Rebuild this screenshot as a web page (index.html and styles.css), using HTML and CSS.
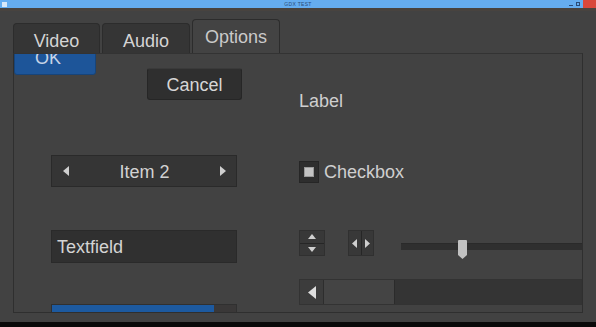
FILE: index.html
```html
<!DOCTYPE html>
<html>
<head>
<meta charset="utf-8">
<link rel="stylesheet" href="styles.css">
</head>
<body>
<header class="titlebar">
  <span class="appicon"></span>
  <span class="title">GDX TEST</span>
  <div class="wincontrols">
    <span class="wc-min"></span>
    <span class="wc-max"></span>
    <span class="wc-close"></span>
  </div>
</header>
<div class="strip"></div>
<main class="window">
  <nav class="tabs">
    <div class="tab">Video</div>
    <div class="tab">Audio</div>
    <div class="tab active">Options</div>
  </nav>
  <section class="panel">
    <div class="col-left">
      <div class="row1">
        <button class="btn btn-ok">OK</button>
        <button class="btn btn-cancel">Cancel</button>
      </div>
      <div class="selectbox">
        <svg class="arrow" width="6" height="10" viewBox="0 0 6 10"><polygon points="6,0 6,10 0,5" fill="#cfcfcf"/></svg>
        <span class="sel-text">Item 2</span>
        <svg class="arrow" width="6" height="10" viewBox="0 0 6 10"><polygon points="0,0 0,10 6,5" fill="#cfcfcf"/></svg>
      </div>
      <div class="textfield">Textfield</div>
      <div class="progress"><div class="progress-fill"></div></div>
    </div>
    <div class="col-right">
      <div class="label">Label</div>
      <div class="checkrow">
        <span class="checkbox"><span class="check-inner"></span></span>
        <span class="check-text">Checkbox</span>
      </div>
      <div class="controlrow">
        <div class="vspin">
          <span class="vspin-half"><svg width="8" height="5" viewBox="0 0 8 5"><polygon points="0,5 8,5 4,0" fill="#cfcfcf"/></svg></span>
          <span class="vspin-half"><svg width="8" height="5" viewBox="0 0 8 5"><polygon points="0,0 8,0 4,5" fill="#cfcfcf"/></svg></span>
        </div>
        <div class="hspin">
          <span class="hspin-half"><svg width="5" height="9" viewBox="0 0 5 9"><polygon points="5,0 5,9 0,4.5" fill="#cfcfcf"/></svg></span>
          <span class="hspin-half"><svg width="5" height="9" viewBox="0 0 5 9"><polygon points="0,0 0,9 5,4.5" fill="#cfcfcf"/></svg></span>
        </div>
        <div class="slider">
          <div class="slider-track"></div>
          <svg class="slider-knob" width="9" height="19" viewBox="0 0 9 19"><path d="M1 0 H8 Q9 0 9 1 V15 L4.5 19 L0 15 V1 Q0 0 1 0 Z" fill="#c2c2c2"/></svg>
        </div>
      </div>
      <div class="scrollbar">
        <span class="sb-btn"><svg width="8" height="13" viewBox="0 0 8 13"><polygon points="8,0 8,13 0,6.5" fill="#dedede"/></svg></span>
        <span class="sb-knob"></span>
        <span class="sb-rest"></span>
      </div>
    </div>
  </section>
</main>
<div class="taskbar"></div>
</body>
</html>
```
FILE: styles.css
```css
html, body {
  margin: 0;
  padding: 0;
}
body {
  width: 596px;
  height: 327px;
  overflow: hidden;
  background: #424242;
  font-family: "Liberation Sans", Arial, sans-serif;
  color: #d2d2d2;
  display: flex;
  flex-direction: column;
}
.titlebar {
  height: 8px;
  background: #65adf0;
  display: flex;
  align-items: center;
  position: relative;
  flex: none;
}
.appicon {
  width: 5px;
  height: 5px;
  margin-left: 2px;
  background: #d8e8f8;
}
.title {
  position: absolute;
  left: 0;
  right: 0;
  text-align: center;
  font-size: 5px;
  line-height: 8px;
  color: #2a4c78;
  letter-spacing: 0.3px;
}
.wincontrols {
  margin-left: auto;
  display: flex;
  align-items: center;
  height: 8px;
  gap: 3px;
}
.wc-min {
  width: 4px;
  height: 1px;
  background: #2a4c78;
  margin-top: 2px;
}
.wc-max {
  width: 4px;
  height: 4px;
  border: 1px solid #2a4c78;
  box-sizing: border-box;
}
.wc-close {
  width: 13px;
  height: 8px;
  background: #d9473b;
}
.strip {
  height: 3px;
  background: #48433f;
  flex: none;
}
.window {
  flex: 1;
  padding: 8px 13px 9px 13px;
  display: flex;
  flex-direction: column;
  min-height: 0;
}
.tabs {
  height: 34px;
  display: flex;
  align-items: flex-end;
  gap: 2px;
  flex: none;
}
.tab {
  width: 87px;
  height: 30px;
  box-sizing: border-box;
  background: #353535;
  border: 1px solid #2c2c2c;
  border-bottom: none;
  border-radius: 4px 4px 0 0;
  font-size: 18px;
  line-height: 21px;
  padding-top: 7px;
  text-align: center;
  color: #d4d4d4;
}
.tab + .tab {
  width: 88px;
}
.tab.active {
  height: 34px;
  background: #434343;
  color: #cacaca;
}
.panel {
  height: 260px;
  box-sizing: border-box;
  border: 1px solid #2f2f2f;
  border-top-color: #333;
  overflow: hidden;
  display: grid;
  grid-template-columns: 285px 1fr;
  align-items: start;
}
.col-left, .col-right {
  display: flex;
  flex-direction: column;
  align-items: flex-start;
}
.row1 {
  display: flex;
  align-items: flex-start;
}
.btn {
  font-family: inherit;
  font-size: 18px;
  height: 32px;
  box-sizing: border-box;
  border-radius: 3px;
  padding: 0;
  display: flex;
  align-items: center;
  justify-content: center;
}
.btn-ok {
  width: 82px;
  margin-top: -11px;
  background: #1d5599;
  border: 1px solid #174479;
  color: #c6d3e6;
  padding-right: 14px;
  padding-bottom: 1px;
}
.btn-cancel {
  width: 95px;
  margin-top: 14px;
  margin-left: 51px;
  background: #2f2f2f;
  border: 1px solid #262626;
  border-top-color: #3a3a3a;
  color: #d6d6d6;
  padding-top: 2px;
}
.selectbox {
  margin: 55px 0 0 37px;
  width: 186px;
  height: 32px;
  box-sizing: border-box;
  background: #353535;
  border: 1px solid #2a2a2a;
  display: flex;
  align-items: center;
  justify-content: space-between;
  padding: 0 10px 0 11px;
  font-size: 18px;
  color: #d2d2d2;
}
.sel-text {
  padding-top: 2px;
}
.textfield {
  margin: 43px 0 0 37px;
  width: 186px;
  height: 33px;
  box-sizing: border-box;
  background: #303030;
  border: 1px solid #2a2a2a;
  font-size: 18px;
  line-height: 33px;
  padding-left: 5px;
  color: #d4d4d4;
}
.progress {
  margin: 41px 0 0 37px;
  width: 186px;
  height: 12px;
  background: #3a3838;
  border: 1px solid #303030;
  box-sizing: border-box;
}
.progress-fill {
  width: 162px;
  height: 100%;
  background: #1d5aa0;
}
.label {
  margin-top: 37px;
  font-size: 18px;
  line-height: 21px;
  color: #cfcfcf;
}
.checkrow {
  margin-top: 48px;
  height: 23px;
  display: flex;
  align-items: center;
  gap: 5px;
  font-size: 18px;
  color: #cfcfcf;
}
.check-text {
  padding-top: 2px;
}
.checkbox {
  width: 20px;
  height: 22px;
  box-sizing: border-box;
  background: #2e2e2e;
  border: 1px solid #262626;
  display: flex;
  align-items: center;
  justify-content: center;
}
.check-inner {
  width: 10px;
  height: 10px;
  box-sizing: border-box;
  background: #c4c4c4;
  border: 1px solid #9a9a9a;
}
.controlrow {
  margin-top: 47px;
  height: 26px;
  width: 100%;
  display: flex;
}
.vspin {
  width: 26px;
  height: 26px;
  box-sizing: border-box;
  background: #383838;
  border: 1px solid #303030;
  display: flex;
  flex-direction: column;
}
.vspin-half {
  flex: 1;
  display: flex;
  align-items: center;
  justify-content: center;
}
.vspin-half + .vspin-half {
  border-top: 1px solid #262626;
}
.hspin {
  margin-left: 23px;
  width: 26px;
  height: 26px;
  box-sizing: border-box;
  background: #383838;
  border: 1px solid #303030;
  display: flex;
}
.hspin-half {
  flex: 1;
  display: flex;
  align-items: center;
  justify-content: center;
}
.hspin-half + .hspin-half {
  border-left: 1px solid #262626;
}
.slider {
  margin-left: 27px;
  flex: 1;
  height: 26px;
  position: relative;
}
.slider-track {
  margin-top: 13px;
  height: 7px;
  background: #2f2f2f;
  border-top: 1px solid #2a2a2a;
  box-sizing: border-box;
}
.slider-knob {
  position: absolute;
  left: 57px;
  top: 10px;
}
.scrollbar {
  margin-top: 23px;
  width: 100%;
  height: 26px;
  display: flex;
  box-sizing: border-box;
  border: 1px solid #333;
}
.sb-btn {
  width: 23px;
  background: #3c3c3c;
  border-right: 1px solid #2d2d2d;
  display: flex;
  align-items: center;
  justify-content: center;
}
.sb-knob {
  width: 70px;
  background: #444;
  border-right: 1px solid #2b2b2b;
}
.sb-rest {
  flex: 1;
  background: #343434;
}
.taskbar {
  height: 5px;
  background: #0a0a0a;
  flex: none;
}
```
